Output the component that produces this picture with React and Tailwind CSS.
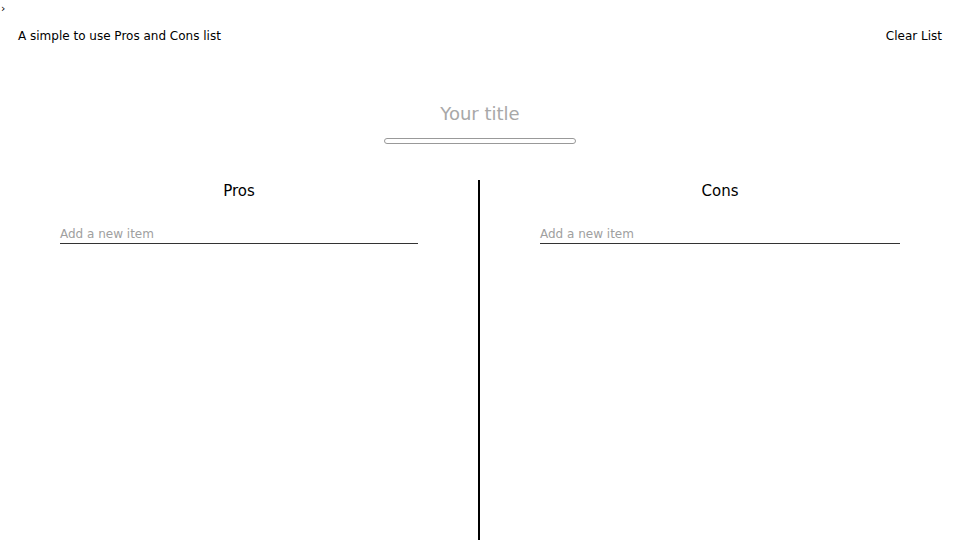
export default function App() {
  return (
    <div className="w-[960px] h-[540px] bg-white flex flex-col overflow-hidden text-black" style={{ fontFamily: '"DejaVu Sans", sans-serif' }}>
      <div className="h-[19px] pl-[1px] text-[11px] leading-[17px]">›</div>
      <div className="flex justify-between items-center px-[18px] h-[34px] text-[12px]">
        <span>A simple to use Pros and Cons list</span>
        <span>Clear List</span>
      </div>
      <div className="flex flex-col items-center mt-[48px]">
        <div className="text-[18px] leading-[26px] text-[#a8a8a8]">Your title</div>
        <div className="mt-[11px] w-[192px] h-[6px] rounded-full border border-[#999]"></div>
      </div>
      <div className="flex flex-1 mt-[36px]">
        <div className="w-[480px] border-r-2 border-black px-[60px] flex flex-col">
          <div className="text-center text-[15px] leading-[20px] mt-[1px]">Pros</div>
          <div className="mt-[25px] border-b border-[#333] text-[12px] leading-[17px] text-[#a0a0a0]">Add a new item</div>
        </div>
        <div className="w-[480px] px-[60px] flex flex-col">
          <div className="text-center text-[15px] leading-[20px] mt-[1px]">Cons</div>
          <div className="mt-[25px] border-b border-[#333] text-[12px] leading-[17px] text-[#a0a0a0]">Add a new item</div>
        </div>
      </div>
    </div>
  );
}
